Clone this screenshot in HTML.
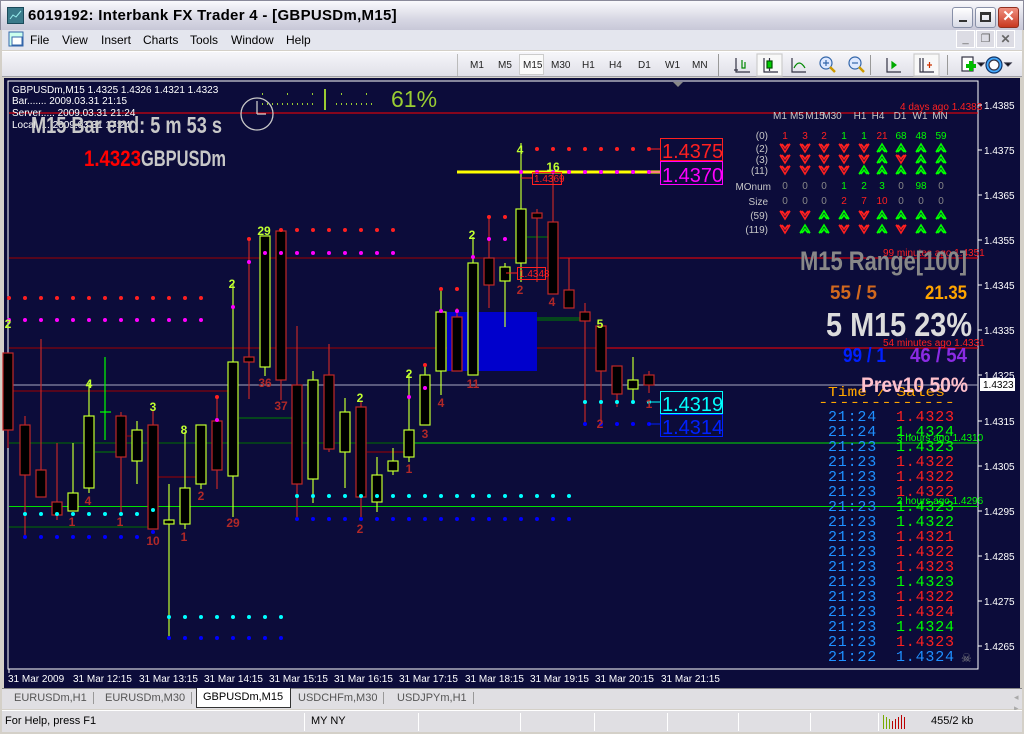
<!DOCTYPE html>
<html><head><meta charset="utf-8">
<style>
*{margin:0;padding:0;box-sizing:border-box}
body{width:1024px;height:734px;overflow:hidden;background:#d4d0c8;font-family:"Liberation Sans",sans-serif;position:relative}
.abs{position:absolute}
#title{left:0;top:0;width:1024px;height:30px;background:linear-gradient(#fafafd,#d8d8e4 60%,#c8c8d8);border:1px solid #8a8a9a;border-bottom:none}
#title .t{left:27px;top:6px;font-size:15px;font-weight:bold;color:#000;letter-spacing:0.3px}
.wb{top:6px;width:21px;height:21px;border:1px solid #8890a8;border-radius:3px;background:linear-gradient(#fff,#d8dae6)}
#menu{left:2px;top:30px;width:1020px;height:20px;background:#e4e6ee}
#menu span{position:absolute;top:3px;font-size:12px;color:#000}
#tool{left:2px;top:51px;width:1020px;height:26px;background:linear-gradient(#f6f6fa,#e0e0e8);border-top:1px solid #fff;border-bottom:1px solid #a0a0a8}
#tool .tf{position:absolute;top:8px;font-size:10px;color:#222}
#chart{left:4px;top:78px;width:1016px;height:610px;background:#0c0c3a}
#tabs{left:2px;top:688px;width:1020px;height:21px;background:#e0dfe3;border-top:1px solid #888}
#tabs span{position:absolute;top:3px;font-size:11px;color:#555;padding:0 6px;border-right:1px solid #999}
#status{left:2px;top:710px;width:1020px;height:22px;background:#e0dfe3;border-top:1px solid #fff}
#status span{position:absolute;top:4px;font-size:11px;color:#000}
.sep{position:absolute;top:2px;width:1px;height:18px;background:#a0a0a0;border-right:1px solid #fff}
</style></head><body>
<div id="title" class="abs">
 <svg class="abs" style="left:6px;top:6px" width="17" height="17"><rect x="0.5" y="0.5" width="16" height="16" fill="#3a7a8a" stroke="#1a4a5a"/><path d="M3 12 L6 8 L9 10 L14 4" stroke="#9ee" fill="none"/></svg>
 <div class="abs t">6019192: Interbank FX Trader 4 - [GBPUSDm,M15]</div>
 <div class="abs wb" style="left:951px"><div class="abs" style="left:6px;top:12px;width:8px;height:2px;background:#333"></div></div>
 <div class="abs wb" style="left:974px"><div class="abs" style="left:4px;top:4px;width:11px;height:10px;border:2px solid #333;border-top-width:3px"></div></div>
 <div class="abs wb" style="left:997px;background:linear-gradient(#f09080,#c83820);border-color:#903020;color:#fff;font-size:15px;font-weight:bold;text-align:center;line-height:18px">✕</div>
</div>
<div id="menu" class="abs">
 <svg class="abs" style="left:6px;top:1px" width="17" height="17"><rect x="1" y="1" width="14" height="14" fill="#cfe" stroke="#36a"/><rect x="4" y="6" width="10" height="8" fill="#fff" stroke="#36a"/></svg>
 <span style="left:28px">File</span><span style="left:60px">View</span><span style="left:99px">Insert</span><span style="left:141px">Charts</span><span style="left:188px">Tools</span><span style="left:229px">Window</span><span style="left:284px">Help</span>
 <div class="abs" style="left:954px;top:0;width:19px;height:18px;border:1px solid #fff;background:#dcdce4;font-size:11px;text-align:center;line-height:16px;color:#666">_</div>
 <div class="abs" style="left:974px;top:0;width:19px;height:18px;border:1px solid #fff;background:#dcdce4;font-size:11px;text-align:center;line-height:16px;color:#666">❐</div>
 <div class="abs" style="left:994px;top:0;width:19px;height:18px;border:1px solid #fff;background:#dcdce4;font-size:12px;font-weight:bold;text-align:center;line-height:16px;color:#666">✕</div>
</div>
<div id="tool" class="abs">
 <div class="abs" style="left:455px;top:2px;width:1px;height:22px;background:#bbb"></div>
 <span class="tf" style="left:468px">M1</span><span class="tf" style="left:496px">M5</span>
 <div class="abs" style="left:517px;top:2px;width:25px;height:21px;background:#fafafa;border:1px solid #ccc"></div>
 <span class="tf" style="left:521px">M15</span><span class="tf" style="left:549px">M30</span><span class="tf" style="left:580px">H1</span><span class="tf" style="left:607px">H4</span><span class="tf" style="left:636px">D1</span><span class="tf" style="left:663px">W1</span><span class="tf" style="left:690px">MN</span>
 <div class="abs" style="left:716px;top:2px;width:1px;height:22px;background:#999"></div>
 <svg class="abs" style="left:720px;top:0" width="300" height="26">
  <g stroke="#334" fill="none" stroke-width="1.2">
   <path d="M14 6v14h14M12 18h4"/><path d="M20 8v8h3v-6" stroke="#080"/>
   <rect x="35" y="2" width="25" height="22" fill="#f8f8f8" stroke="#ccc"/>
   <path d="M42 6v14h14"/><rect x="45" y="9" width="5" height="7" fill="#0c0" stroke="#050"/><path d="M47.5 6v3M47.5 16v3" />
   <path d="M70 6v14h14"/><path d="M72 16 Q77 6 83 16" stroke="#080"/>
   <circle cx="104" cy="11" r="6" fill="#dde8ff" stroke="#36a"/><path d="M108 15l5 5" stroke="#c90" stroke-width="2.5"/><path d="M101 11h6M104 8v6" stroke="#36a"/>
   <circle cx="133" cy="11" r="6" fill="#dde8ff" stroke="#36a"/><path d="M137 15l5 5" stroke="#c90" stroke-width="2.5"/><path d="M130 11h6" stroke="#36a"/>
   <path d="M165 6v14h14"/><path d="M170 10l4 3-4 3z" fill="#0a0" stroke="#0a0"/>
   <rect x="192" y="2" width="25" height="22" fill="#f8f8f8" stroke="#ccc"/>
   <path d="M198 6v14h14M201 6v14"/><path d="M205 13h5M207.5 10v6" stroke="#c30"/>
   <rect x="240" y="5" width="11" height="14" fill="#fff"/><path d="M244 14h10M249 9v10" stroke="#0b0" stroke-width="4"/><path d="M256 11l3 3 3-3z" fill="#000"/>
   <circle cx="272" cy="13" r="8" fill="#4af" stroke="#136"/><circle cx="272" cy="13" r="5" fill="#fff"/><path d="M283 11l3 3 3-3z" fill="#000"/>
  </g>
  <g fill="#999"><rect x="148" y="3" width="1" height="20"/><rect x="225" y="3" width="1" height="20"/></g>
 </svg>
</div>

<div id="chart" class="abs"></div>
<svg class="abs" style="left:0;top:78px" width="1024" height="610" viewBox="0 78 1024 610" font-family="Liberation Sans, sans-serif">
 <rect x="8" y="81" width="970" height="588" fill="none" stroke="#fff" stroke-width="1"/>
 <path d="M673 82l5 5 5-5z" fill="#888"/>
 <line x1="9" y1="113" x2="978" y2="113" stroke="#ff0000"/>
 <line x1="9" y1="258" x2="560" y2="258" stroke="#a00000"/><line x1="560" y1="258" x2="978" y2="258" stroke="#ff0000"/>
 <line x1="9" y1="348" x2="607" y2="348" stroke="#a00000"/><line x1="607" y1="348" x2="978" y2="348" stroke="#ff0000"/>
 <line x1="9" y1="385" x2="978" y2="385" stroke="#a8a8c0"/>
 <line x1="9" y1="391" x2="228" y2="391" stroke="#a00000"/>
 <line x1="9" y1="443" x2="415" y2="443" stroke="#007000"/><line x1="415" y1="443" x2="978" y2="443" stroke="#00e000"/>
 <line x1="9" y1="506.5" x2="978" y2="506.5" stroke="#00e000"/>
 <line x1="9" y1="527" x2="150" y2="527" stroke="#007000"/>
 <g stroke-width="1"><line x1="158" y1="477" x2="196" y2="477" stroke="#a00000"/><line x1="239" y1="418" x2="292" y2="418" stroke="#008000"/><line x1="95" y1="452" x2="116" y2="452" stroke="#008000"/><line x1="127" y1="436" x2="132" y2="436" stroke="#a00000"/><line x1="367" y1="452" x2="404" y2="452" stroke="#a00000"/><line x1="527" y1="237" x2="548" y2="237" stroke="#008000"/><line x1="537" y1="318" x2="580" y2="318" stroke="#008000"/><line x1="537" y1="320" x2="580" y2="320" stroke="#008000"/></g>
 <rect x="447" y="312" width="90" height="59" fill="#0000cc"/>
 <line x1="457" y1="172" x2="660" y2="172" stroke="#ffff00" stroke-width="3"/>
 <g stroke-width="1.2" fill="#000">
  <g stroke="#c02828">
   <line x1="8" y1="353" x2="8" y2="448"/><rect x="3" y="353" width="10" height="77"/>
   <line x1="25" y1="416" x2="25" y2="537"/><rect x="20" y="425" width="10" height="50"/>
   <line x1="41" y1="339" x2="41" y2="497"/><rect x="36" y="470" width="10" height="27"/>
   <line x1="57" y1="443" x2="57" y2="520"/><rect x="52" y="502" width="10" height="13"/>
   <line x1="121" y1="412" x2="121" y2="513"/><rect x="116" y="416" width="10" height="41"/>
   <line x1="153" y1="410" x2="153" y2="529"/><rect x="148" y="425" width="10" height="104"/>
   <line x1="217" y1="397" x2="217" y2="489"/><rect x="212" y="421" width="10" height="49"/>
   <line x1="249" y1="239" x2="249" y2="399"/><rect x="244" y="357" width="10" height="5"/>
   <line x1="281" y1="231" x2="281" y2="400"/><rect x="276" y="231" width="10" height="149"/>
   <line x1="297" y1="326" x2="297" y2="517"/><rect x="292" y="385" width="10" height="99"/>
   <line x1="329" y1="344" x2="329" y2="452"/><rect x="324" y="375" width="10" height="74"/>
   <line x1="361" y1="402" x2="361" y2="517"/><rect x="356" y="407" width="10" height="90"/>
   <line x1="457" y1="308" x2="457" y2="371"/><rect x="452" y="317" width="10" height="54"/>
   <line x1="489" y1="217" x2="489" y2="308"/><rect x="484" y="258" width="10" height="27"/>
   <line x1="537" y1="209" x2="537" y2="282"/><rect x="532" y="213" width="10" height="5"/>
   <line x1="553" y1="172" x2="553" y2="294"/><rect x="548" y="222" width="10" height="72"/>
   <line x1="569" y1="258" x2="569" y2="308"/><rect x="564" y="290" width="10" height="18"/>
   <line x1="585" y1="303" x2="585" y2="422"/><rect x="580" y="312" width="10" height="9"/>
   <line x1="601" y1="326" x2="601" y2="423"/><rect x="596" y="326" width="10" height="45"/>
   <line x1="617" y1="366" x2="617" y2="407"/><rect x="612" y="366" width="10" height="28"/>
   <line x1="649" y1="371" x2="649" y2="393"/><rect x="644" y="375" width="10" height="10"/>
  </g>
  <g stroke="#c0ff30">
   <line x1="73" y1="443" x2="73" y2="511"/><rect x="68" y="493" width="10" height="18"/>
   <line x1="89" y1="383" x2="89" y2="493"/><rect x="84" y="416" width="10" height="72"/>
   <line x1="137" y1="421" x2="137" y2="484"/><rect x="132" y="430" width="10" height="31"/>
   <line x1="169" y1="484" x2="169" y2="637"/><rect x="164" y="520" width="10" height="4"/>
   <line x1="185" y1="432" x2="185" y2="529"/><rect x="180" y="488" width="10" height="36"/>
   <line x1="201" y1="425" x2="201" y2="489"/><rect x="196" y="425" width="10" height="59"/>
   <line x1="233" y1="283" x2="233" y2="517"/><rect x="228" y="362" width="10" height="114"/>
   <line x1="265" y1="236" x2="265" y2="376"/><rect x="260" y="236" width="10" height="131"/>
   <line x1="313" y1="371" x2="313" y2="503"/><rect x="308" y="380" width="10" height="99"/>
   <line x1="345" y1="398" x2="345" y2="488"/><rect x="340" y="412" width="10" height="40"/>
   <line x1="377" y1="457" x2="377" y2="512"/><rect x="372" y="475" width="10" height="27"/>
   <line x1="393" y1="448" x2="393" y2="475"/><rect x="388" y="461" width="10" height="10"/>
   <line x1="409" y1="373" x2="409" y2="462"/><rect x="404" y="430" width="10" height="27"/>
   <line x1="425" y1="365" x2="425" y2="425"/><rect x="420" y="375" width="10" height="50"/>
   <line x1="441" y1="288" x2="441" y2="395"/><rect x="436" y="312" width="10" height="59"/>
   <line x1="473" y1="237" x2="473" y2="375"/><rect x="468" y="263" width="10" height="112"/>
   <line x1="505" y1="263" x2="505" y2="327"/><rect x="500" y="267" width="10" height="14"/>
   <line x1="521" y1="143" x2="521" y2="282"/><rect x="516" y="209" width="10" height="54"/>
   <line x1="633" y1="357" x2="633" y2="402"/><rect x="628" y="380" width="10" height="9"/>
  </g>
  <g stroke="#00ff00"><line x1="105" y1="357" x2="105" y2="440"/><line x1="100" y1="412" x2="111" y2="412"/></g>
 </g>
 <g fill="#ff2020">
  <circle cx="9" cy="298" r="2"/><circle cx="25" cy="298" r="2"/><circle cx="41" cy="298" r="2"/><circle cx="57" cy="298" r="2"/><circle cx="73" cy="298" r="2"/><circle cx="89" cy="298" r="2"/><circle cx="105" cy="298" r="2"/><circle cx="121" cy="298" r="2"/><circle cx="137" cy="298" r="2"/><circle cx="153" cy="298" r="2"/><circle cx="169" cy="298" r="2"/><circle cx="185" cy="298" r="2"/><circle cx="201" cy="298" r="2"/>
  <circle cx="281" cy="230" r="2"/><circle cx="297" cy="230" r="2"/><circle cx="313" cy="230" r="2"/><circle cx="329" cy="230" r="2"/><circle cx="345" cy="230" r="2"/><circle cx="361" cy="230" r="2"/><circle cx="377" cy="230" r="2"/><circle cx="393" cy="230" r="2"/>
  <circle cx="249" cy="239" r="2"/><circle cx="217" cy="397" r="2"/><circle cx="425" cy="365" r="2"/><circle cx="441" cy="289" r="2"/><circle cx="457" cy="289" r="2"/><circle cx="489" cy="217" r="2"/><circle cx="505" cy="217" r="2"/>
  <circle cx="537" cy="149" r="2"/><circle cx="553" cy="149" r="2"/><circle cx="569" cy="149" r="2"/><circle cx="585" cy="149" r="2"/><circle cx="601" cy="149" r="2"/><circle cx="617" cy="149" r="2"/><circle cx="633" cy="149" r="2"/><circle cx="649" cy="149" r="2"/>
 </g>
 <g fill="#ff00ff">
  <circle cx="9" cy="320" r="2"/><circle cx="25" cy="320" r="2"/><circle cx="41" cy="320" r="2"/><circle cx="57" cy="320" r="2"/><circle cx="73" cy="320" r="2"/><circle cx="89" cy="320" r="2"/><circle cx="105" cy="320" r="2"/><circle cx="121" cy="320" r="2"/><circle cx="137" cy="320" r="2"/><circle cx="153" cy="320" r="2"/><circle cx="169" cy="320" r="2"/><circle cx="185" cy="320" r="2"/><circle cx="201" cy="320" r="2"/>
  <circle cx="265" cy="253" r="2"/><circle cx="281" cy="253" r="2"/><circle cx="297" cy="253" r="2"/><circle cx="313" cy="253" r="2"/><circle cx="329" cy="253" r="2"/><circle cx="345" cy="253" r="2"/><circle cx="361" cy="253" r="2"/><circle cx="377" cy="253" r="2"/><circle cx="393" cy="253" r="2"/>
  <circle cx="249" cy="262" r="2"/><circle cx="233" cy="307" r="2"/><circle cx="217" cy="420" r="2"/><circle cx="409" cy="397" r="2"/><circle cx="425" cy="388" r="2"/><circle cx="441" cy="311" r="2"/><circle cx="457" cy="311" r="2"/><circle cx="473" cy="257" r="2"/><circle cx="489" cy="239" r="2"/><circle cx="505" cy="239" r="2"/>
  <circle cx="521" cy="172" r="2"/><circle cx="537" cy="172" r="2"/><circle cx="553" cy="172" r="2"/><circle cx="569" cy="172" r="2"/><circle cx="585" cy="172" r="2"/><circle cx="601" cy="172" r="2"/><circle cx="617" cy="172" r="2"/><circle cx="633" cy="172" r="2"/><circle cx="649" cy="172" r="2"/>
 </g>
 <g fill="#00ffff">
  <circle cx="25" cy="514" r="2"/><circle cx="41" cy="514" r="2"/><circle cx="57" cy="514" r="2"/><circle cx="73" cy="514" r="2"/><circle cx="89" cy="514" r="2"/><circle cx="105" cy="514" r="2"/><circle cx="121" cy="514" r="2"/><circle cx="137" cy="514" r="2"/><circle cx="153" cy="510" r="2"/>
  <circle cx="297" cy="496" r="2"/><circle cx="313" cy="496" r="2"/><circle cx="329" cy="496" r="2"/><circle cx="345" cy="496" r="2"/><circle cx="361" cy="496" r="2"/><circle cx="377" cy="496" r="2"/><circle cx="393" cy="496" r="2"/><circle cx="409" cy="496" r="2"/><circle cx="425" cy="496" r="2"/><circle cx="441" cy="496" r="2"/><circle cx="457" cy="496" r="2"/><circle cx="473" cy="496" r="2"/><circle cx="489" cy="496" r="2"/><circle cx="505" cy="496" r="2"/><circle cx="521" cy="496" r="2"/><circle cx="537" cy="496" r="2"/><circle cx="553" cy="496" r="2"/><circle cx="569" cy="496" r="2"/>
  <circle cx="585" cy="402" r="2"/><circle cx="601" cy="402" r="2"/><circle cx="617" cy="402" r="2"/><circle cx="633" cy="402" r="2"/><circle cx="649" cy="402" r="2"/>
  <circle cx="169" cy="617" r="2"/><circle cx="185" cy="617" r="2"/><circle cx="201" cy="617" r="2"/><circle cx="217" cy="617" r="2"/><circle cx="233" cy="617" r="2"/><circle cx="249" cy="617" r="2"/><circle cx="265" cy="617" r="2"/><circle cx="281" cy="617" r="2"/>
 </g>
 <g fill="#0000ff">
  <circle cx="25" cy="537" r="2"/><circle cx="41" cy="537" r="2"/><circle cx="57" cy="537" r="2"/><circle cx="73" cy="537" r="2"/><circle cx="89" cy="537" r="2"/><circle cx="105" cy="537" r="2"/><circle cx="121" cy="537" r="2"/><circle cx="137" cy="537" r="2"/><circle cx="153" cy="532" r="2"/>
  <circle cx="297" cy="519" r="2"/><circle cx="313" cy="519" r="2"/><circle cx="329" cy="519" r="2"/><circle cx="345" cy="519" r="2"/><circle cx="361" cy="519" r="2"/><circle cx="377" cy="519" r="2"/><circle cx="393" cy="519" r="2"/><circle cx="409" cy="519" r="2"/><circle cx="425" cy="519" r="2"/><circle cx="441" cy="519" r="2"/><circle cx="457" cy="519" r="2"/><circle cx="473" cy="519" r="2"/><circle cx="489" cy="519" r="2"/><circle cx="505" cy="519" r="2"/><circle cx="521" cy="519" r="2"/><circle cx="537" cy="519" r="2"/><circle cx="553" cy="519" r="2"/><circle cx="569" cy="519" r="2"/>
  <circle cx="585" cy="424" r="2"/><circle cx="601" cy="424" r="2"/><circle cx="617" cy="424" r="2"/><circle cx="633" cy="424" r="2"/><circle cx="649" cy="424" r="2"/>
  <circle cx="169" cy="638" r="2"/><circle cx="185" cy="638" r="2"/><circle cx="201" cy="638" r="2"/><circle cx="217" cy="638" r="2"/><circle cx="233" cy="638" r="2"/><circle cx="249" cy="638" r="2"/><circle cx="265" cy="638" r="2"/><circle cx="281" cy="638" r="2"/>
 </g>
 <g font-size="12" font-weight="bold" text-anchor="middle" fill="#c0ff30">
  <text x="8" y="328">2</text><text x="89" y="388">4</text><text x="153" y="411">3</text><text x="184" y="434">8</text><text x="232" y="288">2</text><text x="264" y="235">29</text><text x="360" y="402">2</text><text x="409" y="378">2</text><text x="472" y="239">2</text><text x="520" y="154">4</text><text x="553" y="171">16</text><text x="600" y="328">5</text>
 </g>
 <g font-size="12" font-weight="bold" text-anchor="middle" fill="#b02828">
  <text x="88" y="505">4</text><text x="72" y="526">1</text><text x="120" y="526">1</text><text x="153" y="545">10</text><text x="184" y="541">1</text><text x="201" y="500">2</text><text x="233" y="527">29</text><text x="265" y="387">36</text><text x="281" y="410">37</text><text x="360" y="533">2</text><text x="409" y="473">1</text><text x="425" y="438">3</text><text x="441" y="407">4</text><text x="473" y="388">11</text><text x="520" y="294">2</text><text x="552" y="306">4</text><text x="600" y="428">2</text><text x="649" y="408">1</text>
 </g>
 <g font-size="20">
  <line x1="649" y1="149" x2="660" y2="149" stroke="#ff2020"/><rect x="660.5" y="138.5" width="62" height="22" fill="none" stroke="#ff2020"/><text x="662" y="158" fill="#ff2020">1.4375</text>
  <line x1="649" y1="172" x2="660" y2="172" stroke="#ff00ff"/><rect x="660.5" y="161.5" width="62" height="23" fill="none" stroke="#ff00ff"/><text x="662" y="182" fill="#ff00ff">1.4370</text>
  <line x1="649" y1="402" x2="660" y2="402" stroke="#00ffff"/><rect x="660.5" y="391.5" width="62" height="22" fill="none" stroke="#00ffff"/><text x="662" y="411" fill="#00ffff">1.4319</text>
  <line x1="649" y1="424" x2="660" y2="424" stroke="#0020ff"/><rect x="660.5" y="414.5" width="62" height="22" fill="none" stroke="#0020ff"/><text x="662" y="434" fill="#0020ff">1.4314</text>
 </g>
 <g font-size="10" fill="#ff2020">
  <line x1="521" y1="178" x2="532" y2="178" stroke="#ff2020"/><rect x="532.5" y="172.5" width="29" height="12" fill="none" stroke="#ff2020"/><text x="534" y="182">1.4369</text>
  <line x1="506" y1="273" x2="517" y2="273" stroke="#ff2020"/><rect x="517.5" y="267.5" width="28" height="12" fill="none" stroke="#ff2020"/><text x="519" y="277">1.4348</text>
 </g>
 <g font-size="10" fill="#fff">
  <text x="12" y="93">GBPUSDm,M15  1.4325 1.4326 1.4321 1.4323</text>
  <text x="12" y="104">Bar....... 2009.03.31 21:15</text>
  <text x="12" y="116">Server..... 2009.03.31 21:24</text>
  <text x="12" y="128">Local..... 2009.03.31 17:24</text>
 </g>
 <text x="31" y="133" font-size="23" font-weight="bold" fill="#c8c8c8" textLength="191" lengthAdjust="spacingAndGlyphs">M15 Bar end: 5 m 53 s</text>
 <text x="84" y="166" font-size="22" font-weight="bold" fill="#ff0000" textLength="57" lengthAdjust="spacingAndGlyphs">1.4323</text>
 <text x="141" y="166" font-size="22" font-weight="bold" fill="#c8c8c8" textLength="85" lengthAdjust="spacingAndGlyphs">GBPUSDm</text>
 <circle cx="257" cy="114" r="16" fill="none" stroke="#c8c8c8" stroke-width="1.3"/>
 <g stroke="#c8c8c8" stroke-width="1.3"><line x1="257" y1="114" x2="257" y2="101"/><line x1="257" y1="114" x2="266" y2="114"/></g>
 <g fill="#9acd32"><rect x="262" y="93" width="1" height="2"/><rect x="262" y="103" width="1" height="2"/><rect x="267" y="103" width="1" height="2"/><rect x="272" y="103" width="1" height="2"/><rect x="277" y="103" width="1" height="2"/><rect x="282" y="103" width="1" height="2"/><rect x="287" y="93" width="1" height="2"/><rect x="287" y="103" width="1" height="2"/><rect x="292" y="103" width="1" height="2"/><rect x="297" y="103" width="1" height="2"/><rect x="302" y="103" width="1" height="2"/><rect x="307" y="103" width="1" height="2"/><rect x="312" y="93" width="1" height="2"/><rect x="312" y="103" width="1" height="2"/><rect x="324" y="89" width="2" height="21"/><rect x="336" y="103" width="1" height="2"/><rect x="341" y="93" width="1" height="2"/><rect x="341" y="103" width="1" height="2"/><rect x="346" y="103" width="1" height="2"/><rect x="351" y="103" width="1" height="2"/><rect x="356" y="103" width="1" height="2"/><rect x="361" y="103" width="1" height="2"/><rect x="366" y="93" width="1" height="2"/><rect x="366" y="103" width="1" height="2"/><rect x="371" y="103" width="1" height="2"/></g>
 <text x="391" y="107" font-size="23" fill="#9acd32">61%</text>
 <text x="900" y="110" font-size="10" fill="#ff2020">4 days ago 1.4383</text>
 <g font-size="10" fill="#c8c8c8" text-anchor="middle">
  <text x="780" y="119">M1</text><text x="797" y="119">M5</text><text x="815" y="119">M15</text><text x="832" y="119">M30</text><text x="860" y="119">H1</text><text x="878" y="119">H4</text><text x="900" y="119">D1</text><text x="920" y="119">W1</text><text x="940" y="119">MN</text>
 </g>
 <g font-size="10" fill="#c8c8c8" text-anchor="end">
  <text x="768" y="139">(0)</text><text x="768" y="152">(2)</text><text x="768" y="163">(3)</text><text x="768" y="174">(11)</text><text x="771" y="190">MOnum</text><text x="768" y="205">Size</text><text x="768" y="219">(59)</text><text x="768" y="233">(119)</text>
 </g>
 <g font-size="10" text-anchor="middle">
  <text x="785" y="139" fill="#ff2020">1</text><text x="805" y="139" fill="#ff2020">3</text><text x="824" y="139" fill="#ff2020">2</text><text x="844" y="139" fill="#00ff00">1</text><text x="864" y="139" fill="#00ff00">1</text><text x="882" y="139" fill="#ff2020">21</text><text x="901" y="139" fill="#00ff00">68</text><text x="921" y="139" fill="#00ff00">48</text><text x="941" y="139" fill="#00ff00">59</text>
  <g fill="#888"><text x="785" y="189">0</text><text x="805" y="189">0</text><text x="824" y="189">0</text><text x="901" y="189">0</text><text x="941" y="189">0</text><text x="785" y="204">0</text><text x="805" y="204">0</text><text x="824" y="204">0</text><text x="901" y="204">0</text><text x="921" y="204">0</text><text x="941" y="204">0</text></g>
  <text x="844" y="189" fill="#00ff00">1</text><text x="864" y="189" fill="#00ff00">2</text><text x="882" y="189" fill="#00ff00">3</text><text x="921" y="189" fill="#00ff00">98</text>
  <text x="844" y="204" fill="#ff2020">2</text><text x="864" y="204" fill="#ff2020">7</text><text x="882" y="204" fill="#ff2020">10</text>
 </g>
 <defs>
  <path id="dn" d="M-5 -4 L0 4 L5 -4 M-3 -4 L0 0 L3 -4 M-5 -4 L-1 -2 M5 -4 L1 -2" stroke="#ff2020" stroke-width="1.6" fill="none"/>
  <path id="up" d="M-5 4 L0 -4 L5 4 M-3 4 L0 0 L3 4 M-5 4 L-1 2 M5 4 L1 2" stroke="#00ff00" stroke-width="1.6" fill="none"/>
 </defs>
 <g>
  <use href="#dn" x="785" y="148"/><use href="#dn" x="805" y="148"/><use href="#dn" x="824" y="148"/><use href="#dn" x="844" y="148"/><use href="#dn" x="864" y="148"/><use href="#up" x="882" y="148"/><use href="#up" x="901" y="148"/><use href="#up" x="921" y="148"/><use href="#up" x="941" y="148"/>
  <use href="#dn" x="785" y="159"/><use href="#dn" x="805" y="159"/><use href="#dn" x="824" y="159"/><use href="#dn" x="844" y="159"/><use href="#dn" x="864" y="159"/><use href="#up" x="882" y="159"/><use href="#dn" x="901" y="159"/><use href="#up" x="921" y="159"/><use href="#up" x="941" y="159"/>
  <use href="#dn" x="785" y="170"/><use href="#dn" x="805" y="170"/><use href="#dn" x="824" y="170"/><use href="#dn" x="844" y="170"/><use href="#up" x="864" y="170"/><use href="#up" x="882" y="170"/><use href="#up" x="901" y="170"/><use href="#up" x="921" y="170"/><use href="#up" x="941" y="170"/>
  <use href="#dn" x="785" y="215"/><use href="#dn" x="805" y="215"/><use href="#up" x="824" y="215"/><use href="#up" x="844" y="215"/><use href="#dn" x="864" y="215"/><use href="#up" x="882" y="215"/><use href="#up" x="901" y="215"/><use href="#up" x="921" y="215"/><use href="#up" x="941" y="215"/>
  <use href="#dn" x="785" y="229"/><use href="#up" x="805" y="229"/><use href="#up" x="824" y="229"/><use href="#dn" x="844" y="229"/><use href="#dn" x="864" y="229"/><use href="#up" x="882" y="229"/><use href="#dn" x="901" y="229"/><use href="#up" x="921" y="229"/><use href="#up" x="941" y="229"/>
 </g>
 <g font-weight="bold">
  <text x="883" y="256" font-size="10" font-weight="normal" fill="#ff2020">99 minutes ago 1.4351</text>
  <text x="800" y="270" font-size="27" fill="#888" textLength="167" lengthAdjust="spacingAndGlyphs">M15 Range[100]</text>
  <text x="830" y="299" font-size="19" fill="#d2691e" textLength="47" lengthAdjust="spacingAndGlyphs">55 / 5</text>
  <text x="925" y="299" font-size="19" fill="#ffa500" textLength="42" lengthAdjust="spacingAndGlyphs">21.35</text>
  <text x="826" y="336" font-size="33" fill="#dcdcdc" textLength="146" lengthAdjust="spacingAndGlyphs">5  M15 23%</text>
  <text x="883" y="346" font-size="10" font-weight="normal" fill="#ff2020">54 minutes ago 1.4331</text>
  <text x="843" y="362" font-size="20" fill="#0020ff" textLength="43" lengthAdjust="spacingAndGlyphs">99 / 1</text>
  <text x="910" y="362" font-size="20" fill="#8a2be2" textLength="57" lengthAdjust="spacingAndGlyphs">46 / 54</text>
 </g>
 <g font-family="Liberation Mono, monospace">
  <text x="828" y="396" font-size="14" fill="#ffa500" textLength="117" lengthAdjust="spacingAndGlyphs">Time / Sales</text>
  <text x="818" y="406" font-size="14" fill="#ffa500" textLength="137" lengthAdjust="spacingAndGlyphs">-------------</text>
 </g>
 <text x="861" y="392" font-size="21" font-weight="bold" fill="#ffc0cb" textLength="107" lengthAdjust="spacingAndGlyphs">Prev10  50%</text>
 <g font-family="Liberation Mono, monospace" font-size="15" letter-spacing="0.8">
  <g fill="#1e90ff"><text x="828" y="421">21:24</text><text x="828" y="436">21:24</text><text x="828" y="451">21:23</text><text x="828" y="466">21:23</text><text x="828" y="481">21:23</text><text x="828" y="496">21:23</text><text x="828" y="511">21:23</text><text x="828" y="526">21:23</text><text x="828" y="541">21:23</text><text x="828" y="556">21:23</text><text x="828" y="571">21:23</text><text x="828" y="586">21:23</text><text x="828" y="601">21:23</text><text x="828" y="616">21:23</text><text x="828" y="631">21:23</text><text x="828" y="646">21:23</text><text x="828" y="661">21:22</text></g>
  <text x="896" y="421" fill="#ff2020">1.4323</text><text x="896" y="436" fill="#00ff00">1.4324</text><text x="896" y="451" fill="#00ff00">1.4323</text><text x="896" y="466" fill="#ff2020">1.4322</text><text x="896" y="481" fill="#ff2020">1.4322</text><text x="896" y="496" fill="#ff2020">1.4322</text><text x="896" y="511" fill="#00ff00">1.4323</text><text x="896" y="526" fill="#00ff00">1.4322</text><text x="896" y="541" fill="#ff2020">1.4321</text><text x="896" y="556" fill="#ff2020">1.4322</text><text x="896" y="571" fill="#ff2020">1.4323</text><text x="896" y="586" fill="#00ff00">1.4323</text><text x="896" y="601" fill="#ff2020">1.4322</text><text x="896" y="616" fill="#ff2020">1.4324</text><text x="896" y="631" fill="#00ff00">1.4324</text><text x="896" y="646" fill="#ff2020">1.4323</text><text x="896" y="661" fill="#1e90ff">1.4324</text>
 </g>
 <text x="897" y="441" font-size="10" fill="#00ff00">3 hours ago 1.4310</text>
 <text x="897" y="504" font-size="10" fill="#00ff00">2 hours ago 1.4296</text>
 <text x="961" y="662" font-size="12" fill="#888">☠</text>
 <g stroke="#fff"><line x1="978" y1="105" x2="982" y2="105"/><line x1="978" y1="150" x2="982" y2="150"/><line x1="978" y1="195" x2="982" y2="195"/><line x1="978" y1="240" x2="982" y2="240"/><line x1="978" y1="285" x2="982" y2="285"/><line x1="978" y1="330" x2="982" y2="330"/><line x1="978" y1="375" x2="982" y2="375"/><line x1="978" y1="421" x2="982" y2="421"/><line x1="978" y1="466" x2="982" y2="466"/><line x1="978" y1="511" x2="982" y2="511"/><line x1="978" y1="556" x2="982" y2="556"/><line x1="978" y1="601" x2="982" y2="601"/><line x1="978" y1="646" x2="982" y2="646"/></g>
 <g font-size="10" fill="#fff">
  <text x="984" y="109">1.4385</text><text x="984" y="154">1.4375</text><text x="984" y="199">1.4365</text><text x="984" y="244">1.4355</text><text x="984" y="289">1.4345</text><text x="984" y="334">1.4335</text><text x="984" y="379">1.4325</text><text x="984" y="425">1.4315</text><text x="984" y="470">1.4305</text><text x="984" y="515">1.4295</text><text x="984" y="560">1.4285</text><text x="984" y="605">1.4275</text><text x="984" y="650">1.4265</text>
 </g>
 <rect x="980" y="378" width="35" height="13" fill="#fff"/><text x="983" y="388" font-size="10" fill="#000">1.4323</text>
 <g stroke="#fff"><line x1="9" y1="669" x2="9" y2="673"/></g>
 <g font-size="10" fill="#fff">
  <text x="8" y="682">31 Mar 2009</text><text x="73" y="682">31 Mar 12:15</text><text x="139" y="682">31 Mar 13:15</text><text x="204" y="682">31 Mar 14:15</text><text x="269" y="682">31 Mar 15:15</text><text x="334" y="682">31 Mar 16:15</text><text x="399" y="682">31 Mar 17:15</text><text x="465" y="682">31 Mar 18:15</text><text x="530" y="682">31 Mar 19:15</text><text x="595" y="682">31 Mar 20:15</text><text x="661" y="682">31 Mar 21:15</text>
 </g>
</svg>

<div id="tabs" class="abs">
 <span style="left:6px">EURUSDm,H1</span><span style="left:97px">EURUSDm,M30</span>
 <div class="abs" style="left:194px;top:-1px;width:95px;height:20px;background:#fff;border:1px solid #333;border-top:none;font-size:11px;padding:3px 0 0 6px">GBPUSDm,M15</div>
 <span style="left:290px">USDCHFm,M30</span><span style="left:389px">USDJPYm,H1</span>
 <span style="left:1006px;border:none;color:#aaa;font-size:9px">◂ ▸</span>
</div>
<div id="status" class="abs">
 <span style="left:3px">For Help, press F1</span>
 <div class="sep" style="left:302px"></div><span style="left:309px">MY NY</span>
 <div class="sep" style="left:416px"></div><div class="sep" style="left:518px"></div><div class="sep" style="left:592px"></div><div class="sep" style="left:665px"></div><div class="sep" style="left:736px"></div><div class="sep" style="left:808px"></div><div class="sep" style="left:876px"></div>
 <svg class="abs" style="left:880px;top:4px" width="26" height="14"><g fill="#7a0"><rect x="1" y="0" width="1" height="14"/><rect x="4" y="2" width="1" height="12"/><rect x="7" y="4" width="1" height="10"/></g><g fill="#b00"><rect x="10" y="6" width="1" height="8"/><rect x="13" y="4" width="1" height="10"/><rect x="16" y="2" width="1" height="12"/><rect x="19" y="0" width="1" height="14"/><rect x="22" y="2" width="1" height="12"/></g></svg>
 <span style="left:929px">455/2 kb</span>
</div>
</body></html>
